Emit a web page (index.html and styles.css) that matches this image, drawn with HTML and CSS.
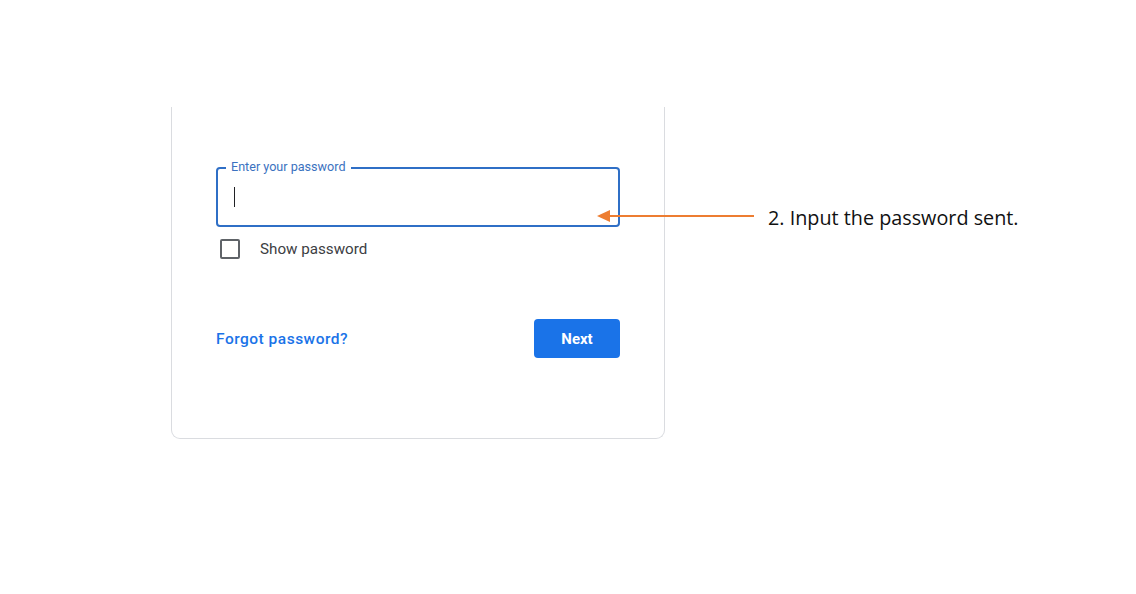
FILE: index.html
```html
<!DOCTYPE html>
<html>
<head>
<meta charset="utf-8">
<link rel="stylesheet" href="styles.css">
</head>
<body>
<div class="page">
  <div class="card">
    <div class="field">
      <span class="field-label">Enter your password</span>
      <span class="caret"></span>
    </div>
    <label class="show">
      <span class="box"></span>
      <span class="show-text">Show password</span>
    </label>
    <div class="actions">
      <a class="forgot">Forgot password?</a>
      <button class="next">Next</button>
    </div>
  </div>
  <div class="callout">
    <svg class="arrow" width="160" height="14" viewBox="0 0 160 14">
      <line x1="10" y1="7" x2="157" y2="7" stroke="#ed7d31" stroke-width="2"/>
      <polygon points="0,7 13,1 13,13" fill="#ed7d31"/>
    </svg>
    <span class="callout-text">2. Input the password sent.</span>
  </div>
</div>
</body>
</html>
```

FILE: styles.css
```css
html, body {
  margin: 0;
  background: #ffffff;
}
.page {
  position: relative;
  width: 1136px;
  height: 594px;
  padding: 107px 0 0 171px;
  box-sizing: border-box;
  font-family: Roboto, "Liberation Sans", sans-serif;
}
.card {
  width: 494px;
  height: 332px;
  box-sizing: border-box;
  border: 1px solid #dadce0;
  border-top: none;
  border-radius: 0 0 9px 9px;
  padding: 60px 44px 0 44px;
  display: flex;
  flex-direction: column;
}
.field {
  position: relative;
  height: 60px;
  box-sizing: border-box;
  border: 2px solid #2f6fc6;
  border-radius: 4px;
  display: flex;
  align-items: center;
  padding-left: 16px;
}
.field-label {
  position: absolute;
  top: -9px;
  left: 8px;
  padding: 0 5px;
  background: #fff;
  font-size: 12.6px;
  line-height: 14px;
  color: #3b72c0;
}
.caret {
  width: 1px;
  height: 20px;
  background: #202124;
}
.show {
  display: flex;
  align-items: center;
  margin-top: 12px;
  height: 20px;
}
.box {
  width: 20px;
  height: 20px;
  box-sizing: border-box;
  border: 2px solid #5f6368;
  border-radius: 2px;
  margin-left: 4px;
}
.show-text {
  margin-left: 20px;
  font-size: 15.2px;
  color: #3c4043;
}
.actions {
  display: flex;
  justify-content: space-between;
  align-items: center;
  margin-top: 60px;
}
.forgot {
  font-size: 15.5px;
  font-weight: 500;
  color: #1a73e8;
  letter-spacing: 0.5px;
}
.next {
  width: 86px;
  height: 39px;
  border: none;
  border-radius: 4px;
  background: #1a73e8;
  color: #fff;
  font-family: Roboto, "Liberation Sans", sans-serif;
  font-size: 15px;
  font-weight: 700;
}
.callout {
  position: absolute;
  left: 597px;
  top: 203px;
  display: flex;
  align-items: flex-start;
}
.arrow {
  display: block;
  margin-top: 6px;
}
.callout-text {
  margin-left: 11px;
  margin-top: 1px;
  line-height: 27px;
  font-family: "Open Sans", "Liberation Sans", sans-serif;
  font-size: 19.8px;
  color: #111;
}
```
